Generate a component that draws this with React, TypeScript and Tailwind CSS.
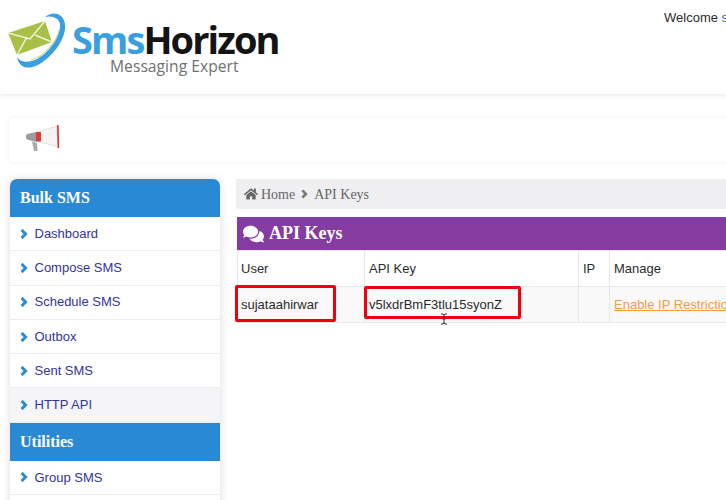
import { FaComments, FaHome } from "react-icons/fa";

const BULK = ["Dashboard", "Compose SMS", "Schedule SMS", "Outbox", "Sent SMS", "HTTP API"];

function Chevron({ className }: { className: string }) {
  return (
    <svg viewBox="0 0 8 10" className={className}>
      <path d="M1.6 0.9 L5.6 5 L1.6 9.1" fill="none" stroke="currentColor" strokeWidth="2.9" />
    </svg>
  );
}

function EnvelopeLogo() {
  // drawn in page pixels, offset by the svg's own top-left corner (8,13)
  return (
    <svg width="62" height="58" viewBox="8 13 62 58" className="shrink-0">
      <path
        d="M45 17 C52 11 63 12 65 24 C67 38 52 58 38 65 C28 70 19 68 17 57 C21 63 29 63 37 59 C50 52 61 36 60 24 C59 18 52 15 45 17Z"
        fill="#3a9fe0"
      />
      <path d="M8 33 L45 21 L52 42 L17 55Z" fill="#a9c048" />
      <path d="M8 33 L30 39 L45 21 M17 55 L27 37 M52 42 L35 35" fill="none" stroke="#eef3d6" strokeWidth="1.5" />
      <path d="M31 60 C44 56 57 42 59 30" fill="none" stroke="#c5d57f" strokeWidth="1.1" />
    </svg>
  );
}

function Megaphone() {
  return (
    <svg width="35" height="28" viewBox="0 0 35 28" className="mb-[2px]">
      <path d="M12 7 L32 1 L33 22 L12 16Z" fill="#f5f5f5" stroke="#cfcfcf" strokeWidth="0.6" />
      <path d="M32.8 0 L33.4 23" stroke="#dd3b34" strokeWidth="1.7" />
      <rect x="11" y="7" width="5" height="9.5" fill="#dd3b34" />
      <path d="M2 9 L11 7 L11 17 L2 14.5 C0.5 13 0.5 10.5 2 9Z" fill="#9b9ea1" />
      <path d="M7 16.5 L12 18 L12.5 26 L9 26Z" fill="#a9abad" />
    </svg>
  );
}

function SideHead({ label, rounded }: { label: string; rounded?: boolean }) {
  return (
    <div
      className={`flex h-[38px] items-center bg-[#2a89d5] pl-[10.5px] font-['Liberation_Serif',serif] text-[16px] font-bold text-white ${
        rounded ? "rounded-t-[7px]" : ""
      }`}
    >
      {label}
    </div>
  );
}

function SideItem({ label, active }: { label?: string; active?: boolean }) {
  return (
    <div
      className={`flex h-[34.3px] items-center gap-[6.5px] border-b border-[#ececf0] pl-[10.5px] text-[13px] text-[#33349a] ${
        active ? "bg-[#f5f5f7]" : "bg-white"
      }`}
    >
      {label && <Chevron className="h-[10px] w-[8px] text-[#2a89d5]" />}
      {label}
    </div>
  );
}

export default function App() {
  return (
    <div className="relative h-[500px] w-[726px] overflow-hidden bg-white font-['Liberation_Sans',sans-serif]">
      {/* Header */}
      <header className="flex h-[94px] items-start justify-between shadow-[0_2px_5px_rgba(0,0,0,0.08)]">
        <div className="flex items-start pl-[8px] pt-[13px]">
          <EnvelopeLogo />
          <div className="ml-[2px] flex flex-col items-start pt-[9px]">
            <div className="font-['Open_Sans',sans-serif] text-[38px] leading-[34px] font-bold tracking-[-1.9px]">
              <span className="text-[#3a9fe0]">Sms</span>
              <span className="text-[#141414]">Horizon</span>
            </div>
            <div className="pl-[38px] font-['Open_Sans',sans-serif] text-[15.7px] leading-[20px] text-[#6f7173]">
              Messaging Expert
            </div>
          </div>
        </div>
        <div className="w-[62px] shrink-0 pt-[9px] text-[13px] leading-[18px] whitespace-nowrap text-[#2b2b2b]">
          Welcome <span className="text-[#3b5fc0]">sujataahirwar</span>
        </div>
      </header>

      {/* Notice bar */}
      <div className="mt-[24px] ml-[9px] flex h-[44px] w-[760px] items-center rounded-[4px] pl-[16px] shadow-[0_0_4px_rgba(0,0,0,0.08)]">
        <Megaphone />
      </div>

      <div className="mt-[17px] ml-[9.5px] flex w-[900px] items-start gap-[16px]">
        {/* Sidebar */}
        <aside className="w-[210.5px] shrink-0 rounded-t-[7px] bg-white shadow-[0_0_8px_rgba(0,0,0,0.14)]">
          <SideHead label="Bulk SMS" rounded />
          {BULK.map((label) => (
            <SideItem key={label} label={label} active={label === "HTTP API"} />
          ))}
          <SideHead label="Utilities" />
          <SideItem label="Group SMS" />
          <SideItem />
        </aside>

        {/* Main */}
        <main className="w-[600px] shrink-0">
          <div className="flex h-[30px] items-center gap-[5px] bg-[#efeff1] pl-[8px] font-['Liberation_Serif',serif] text-[14px] text-[#666]">
            <FaHome className="mr-[-2px] h-[14px] w-[14px] text-[#666]" />
            <span>Home</span>
            <Chevron className="mx-[1px] h-[10px] w-[7px] text-[#777]" />
            <span>API Keys</span>
          </div>
          <div className="mt-[8px] ml-[1px] flex h-[33px] items-center gap-[5px] bg-[#843ca1] pl-[6px] font-['Liberation_Serif',serif] text-[18px] font-bold text-white">
            <FaComments className="h-[20px] w-[21px]" />
            API Keys
          </div>
          <table className="ml-[1px] w-full table-fixed border-collapse text-[13px] text-[#2b2b2b]">
            <colgroup>
              <col className="w-[127px]" />
              <col className="w-[214px]" />
              <col className="w-[31px]" />
              <col />
            </colgroup>
            <tbody>
              <tr className="h-[36px]">
                <td className="border border-[#e8e8ea] pl-[3px]">User</td>
                <td className="border border-[#e8e8ea] pl-[4px]">API Key</td>
                <td className="border border-[#e8e8ea] pl-[4px]">IP</td>
                <td className="border border-[#e8e8ea] pl-[4px]">Manage</td>
              </tr>
              <tr className="h-[36px] bg-[#f9f9fa]">
                <td className="border border-[#e8e8ea] pl-[3px]">sujataahirwar</td>
                <td className="border border-[#e8e8ea] pl-[4px]">v5lxdrBmF3tlu15syonZ</td>
                <td className="border border-[#e8e8ea] pl-[4px]"></td>
                <td className="border border-[#e8e8ea] pl-[4px]">
                  <span className="whitespace-nowrap text-[#f59a42] underline">Enable IP Restriction</span>
                </td>
              </tr>
            </tbody>
          </table>
        </main>
      </div>

      {/* Red highlight boxes drawn over the screenshot */}
      <div className="absolute top-[285px] left-[235px] h-[37px] w-[101px] rounded-[2px] border-[3px] border-[#f0000f]" />
      <div className="absolute top-[286px] left-[364px] h-[33px] w-[157px] rounded-[2px] border-[3px] border-[#f0000f]" />

      {/* I-beam cursor */}
      <svg width="8" height="12" viewBox="0 0 8 12" className="absolute top-[313px] left-[440px]">
        <path d="M1 1 H3 L4 2 L5 1 H7 M4 2 V10 M1 11 H3 L4 10 L5 11 H7 M2.5 6 H5.5" fill="none" stroke="#333" strokeWidth="1" />
      </svg>
    </div>
  );
}
